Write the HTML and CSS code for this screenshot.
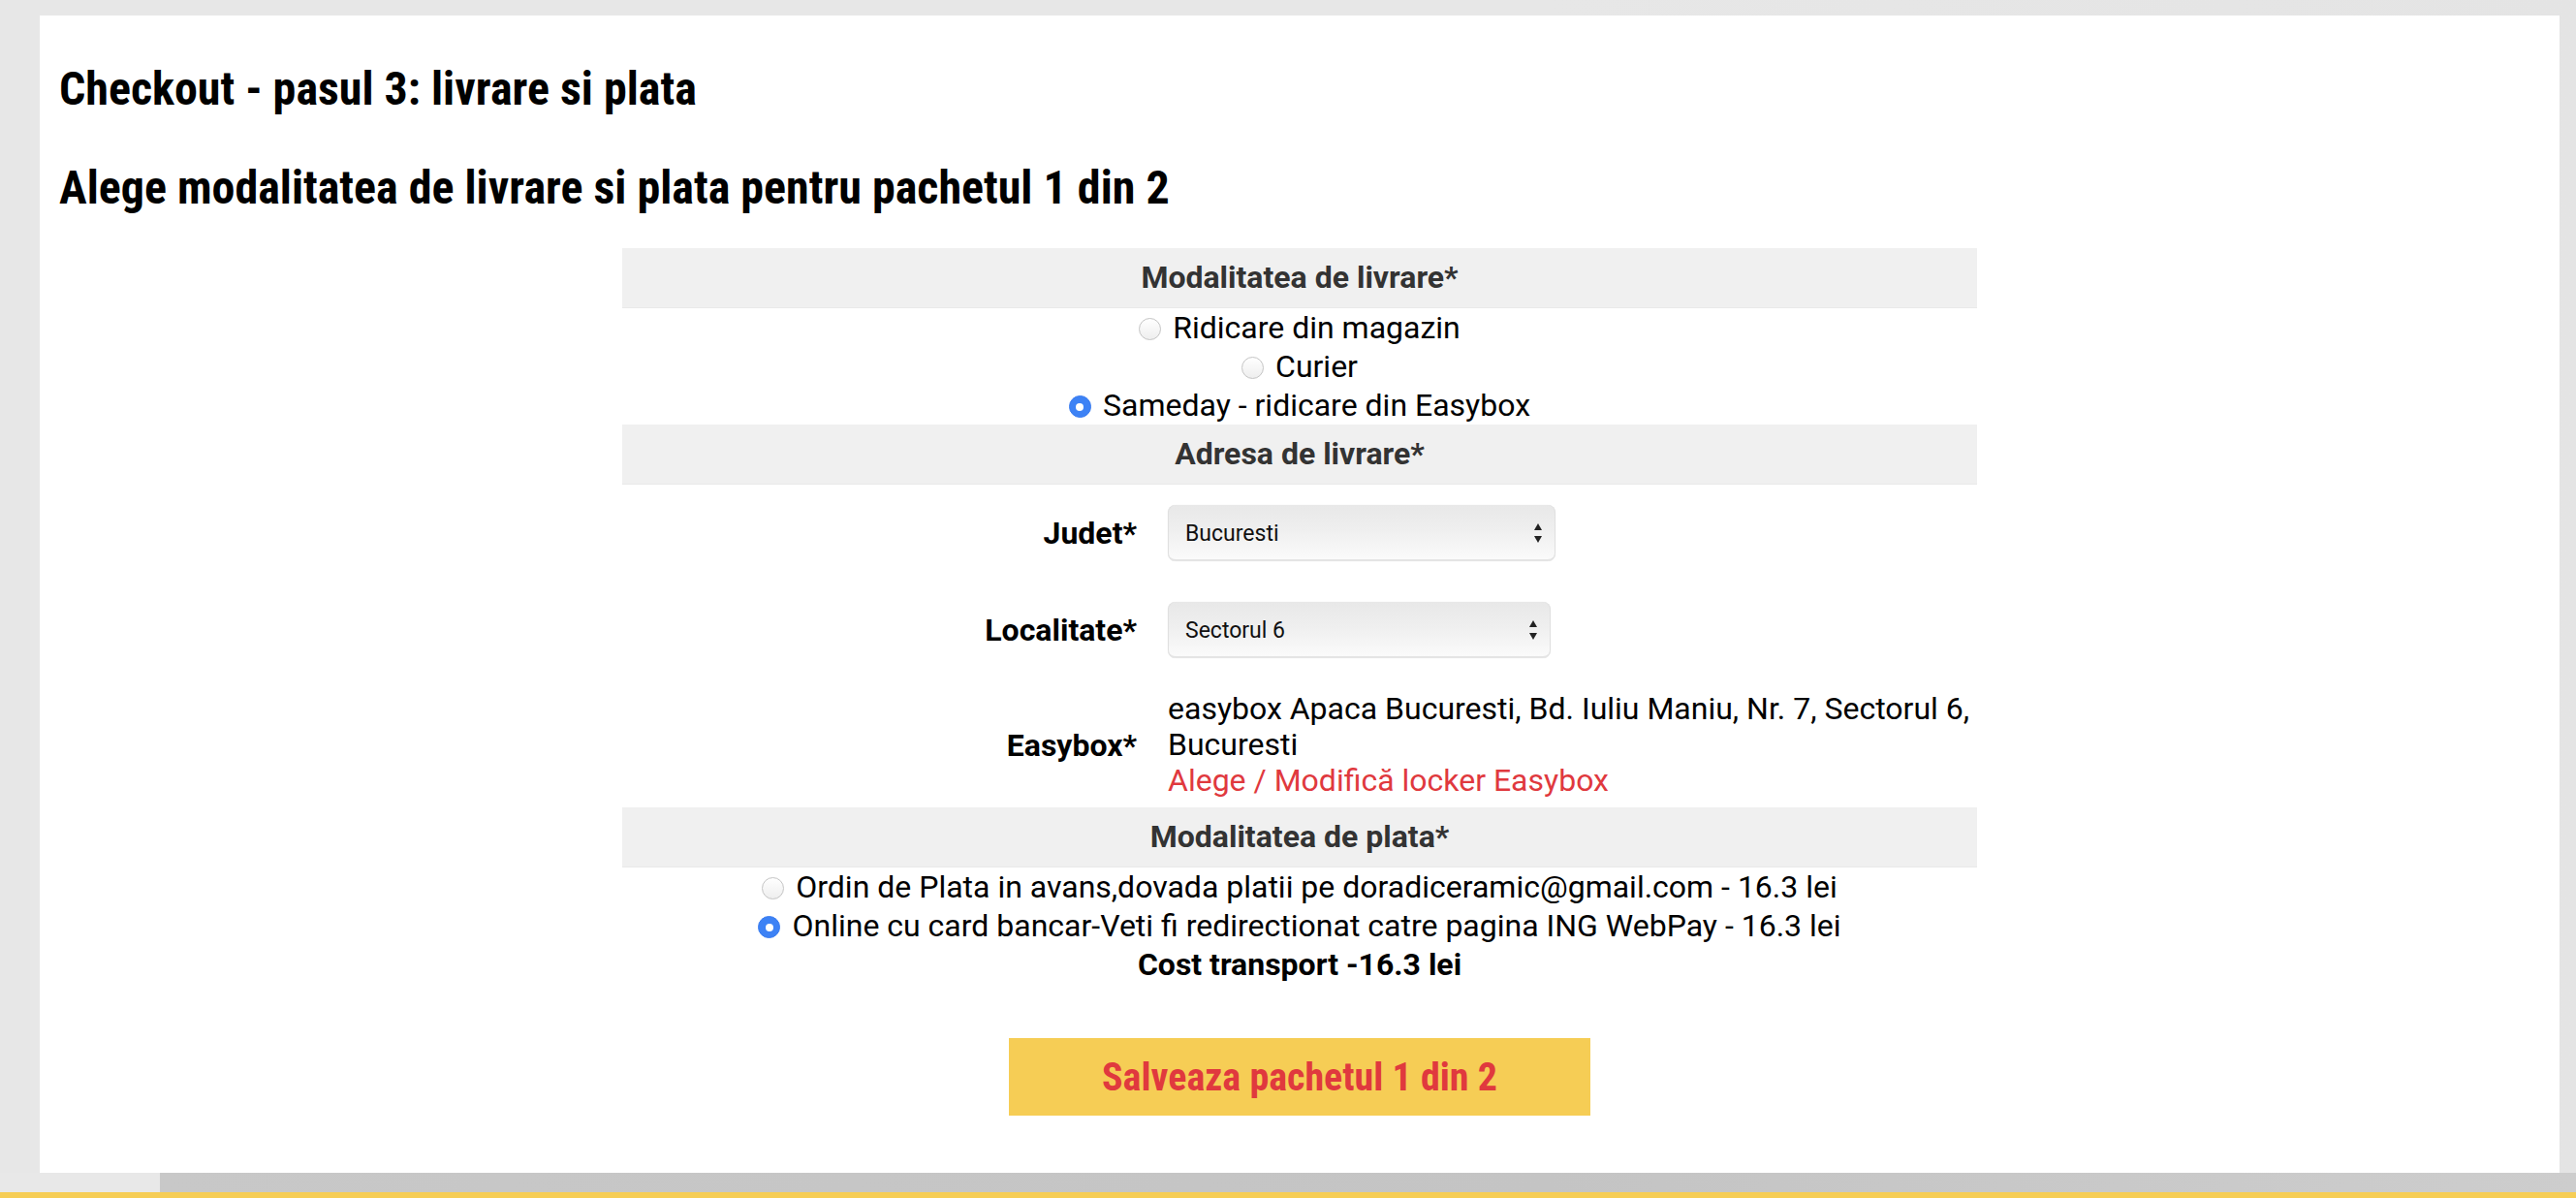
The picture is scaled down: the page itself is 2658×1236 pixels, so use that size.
FILE: index.html
```html
<!DOCTYPE html>
<html lang="ro">
<head>
<meta charset="utf-8">
<title>Checkout - pasul 3</title>
<link rel="stylesheet" href="styles.css">
</head>
<body>
<div class="page">
  <main class="panel">
    <h1 class="title">Checkout - pasul 3: livrare si plata</h1>
    <h2 class="subtitle">Alege modalitatea de livrare si plata pentru pachetul 1 din 2</h2>

    <section class="form">
      <div class="band">Modalitatea de livrare*</div>
      <div class="options">
        <div class="opt"><span class="radio"></span>Ridicare din magazin</div>
        <div class="opt"><span class="radio"></span>Curier</div>
        <div class="opt"><span class="radio on"></span>Sameday - ridicare din Easybox</div>
      </div>

      <div class="band">Adresa de livrare*</div>
      <div class="field">
        <div class="label">Judet*</div>
        <div class="value">
          <div class="select wide">
            <span>Bucuresti</span>
            <svg class="arrows" width="10" height="22" viewBox="0 0 10 22"><path d="M5 1 L9 8 L1 8 Z" fill="#222"/><path d="M1 14 L9 14 L5 21 Z" fill="#222"/></svg>
          </div>
        </div>
      </div>
      <div class="field">
        <div class="label">Localitate*</div>
        <div class="value">
          <div class="select narrow">
            <span>Sectorul 6</span>
            <svg class="arrows" width="10" height="22" viewBox="0 0 10 22"><path d="M5 1 L9 8 L1 8 Z" fill="#222"/><path d="M1 14 L9 14 L5 21 Z" fill="#222"/></svg>
          </div>
        </div>
      </div>
      <div class="field easy">
        <div class="label">Easybox*</div>
        <div class="value text">
          <div>easybox Apaca Bucuresti, Bd. Iuliu Maniu, Nr. 7, Sectorul 6, Bucuresti</div>
          <a class="link" href="#">Alege / Modifică locker Easybox</a>
        </div>
      </div>

      <div class="band">Modalitatea de plata*</div>
      <div class="options">
        <div class="opt"><span class="radio"></span>Ordin de Plata in avans,dovada platii pe doradiceramic@gmail.com - 16.3 lei</div>
        <div class="opt"><span class="radio on"></span>Online cu card bancar-Veti fi redirectionat catre pagina ING WebPay - 16.3 lei</div>
      </div>
      <div class="cost">Cost transport -16.3 lei</div>
    </section>

    <div class="actions">
      <button class="save" type="button">Salveaza pachetul 1 din 2</button>
    </div>
  </main>
  <div class="strip"></div>
  <div class="yellow"></div>
</div>
</body>
</html>
```

FILE: styles.css
```css
* { box-sizing: border-box; }

html, body {
  margin: 0;
  padding: 0;
}

body {
  background: linear-gradient(to right, #e7e7e7 0, #e7e7e7 60%, #e4e4e4 100%);
  font-family: Roboto, "Liberation Sans", sans-serif;
  color: #000;
  height: 1236px;
  overflow: hidden;
}

.page {
  padding: 16px 17px 0 41px;
}

.panel {
  background: #fff;
  height: 1194px;
  padding: 0 20px 0 20px;
  display: flex;
  flex-direction: column;
}

.title, .subtitle {
  font-family: "Roboto Condensed", Roboto, sans-serif;
  font-stretch: 75%;
  font-weight: 700;
  font-size: 48px;
  line-height: 56px;
  margin: 0;
  color: #000;
}

.title { margin-top: 48px; }
.subtitle { margin-top: 46px; }

.form {
  width: 1398px;
  margin: 34px auto 0;
}

.band {
  background: #f0f0f0;
  border-bottom: 1px solid #e9e9e9;
  height: 62px;
  line-height: 61px;
  text-align: center;
  font-weight: 700;
  font-size: 32px;
  color: #333;
}

.options {
  text-align: center;
  font-size: 32px;
  line-height: 40px;
}

.radio {
  display: inline-block;
  width: 23px;
  height: 23px;
  border-radius: 50%;
  border: 1px solid #c4c4c4;
  background: linear-gradient(to bottom, #ffffff, #eeeeee);
  vertical-align: -2px;
  margin-right: 12px;
  position: relative;
}

.radio.on {
  border-color: #3a7cf0;
  background: #3d82f5;
}

.radio.on::after {
  content: "";
  position: absolute;
  left: 50%;
  top: 50%;
  width: 8px;
  height: 8px;
  margin: -4px 0 0 -4px;
  border-radius: 50%;
  background: #fff;
}

.field {
  display: grid;
  grid-template-columns: 531px 835px;
  column-gap: 32px;
  align-items: center;
  padding: 21px 0;
}

.label {
  text-align: right;
  font-weight: 700;
  font-size: 32px;
  line-height: 40px;
}

.select {
  height: 58px;
  border-radius: 8px;
  background: linear-gradient(to bottom, #e8e8e8 0%, #efefef 45%, #f8f8f8 85%, #fbfbfb 100%);
  box-shadow: inset 0 -2px 0 #e4e4e4, inset 1px 0 0 #e0e0e0, inset -1px 0 0 #e0e0e0, 0 0 1px rgba(0,0,0,0.12);
  display: flex;
  align-items: center;
  justify-content: space-between;
  padding: 0 13px 0 18px;
  font-size: 23px;
  color: #111;
}

.select.wide { width: 400px; }
.select.narrow { width: 395px; }

.arrows { display: block; }

.field.easy {
  padding: 13px 0 9px;
}

.value.text {
  font-size: 32px;
  line-height: 37px;
}

.link {
  color: #e0393e;
  text-decoration: none;
}

.cost {
  text-align: center;
  font-weight: 700;
  font-size: 32px;
  line-height: 40px;
}

.actions {
  display: flex;
  justify-content: center;
  margin-top: 56px;
}

.save {
  width: 600px;
  height: 80px;
  border: 0;
  background: #f6cd55;
  color: #e0393e;
  font-family: "Roboto Condensed", Roboto, sans-serif;
  font-stretch: 75%;
  font-weight: 700;
  font-size: 40px;
  cursor: pointer;
}

.strip {
  height: 20px;
  margin-left: -41px;
  margin-right: -17px;
  background: linear-gradient(to right, #e8e8e8 0, #e8e8e8 165px, #c8c8c8 165px, #c4c4c4 60%, #cdcdcd 100%);
}

.yellow {
  height: 6px;
  margin-left: -41px;
  margin-right: -17px;
  background: #f6cd55;
}
```
